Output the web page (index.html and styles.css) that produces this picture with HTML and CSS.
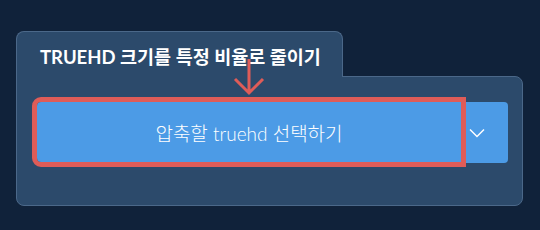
FILE: index.html
```html
<!DOCTYPE html>
<html lang="ko">
<head>
<meta charset="utf-8">
<link rel="stylesheet" href="styles.css">
</head>
<body>
<div class="card">
  <div class="tab"><h2 class="title">TRUEHD 크기를 특정 비율로 줄이기</h2></div>
  <div class="panel">
    <div class="split">
      <button class="main-btn">압축할 truehd 선택하기</button>
      <button class="toggle" aria-label="더보기">
        <svg width="16" height="10" viewBox="0 0 16 10"><path d="M1 1.5 L8 8.5 L15 1.5" fill="none" stroke="#ffffff" stroke-width="1.5"/></svg>
      </button>
    </div>
  </div>
  <svg class="arrow" width="32" height="38" viewBox="0 0 32 38"><path d="M16 1 V35 M2 21 L16 35 L30 21" fill="none" stroke="#df5c58" stroke-width="3" stroke-linejoin="miter"/></svg>
</div>
</body>
</html>
```
FILE: styles.css
```css
html, body {
  margin: 0;
  padding: 0;
  background: #10223a;
}
body {
  width: 540px;
  height: 230px;
  overflow: hidden;
  font-family: Lato, "Noto Sans CJK KR", sans-serif;
}
.card {
  position: relative;
  margin: 31px 0 0 16px;
  width: 507px;
}
.tab {
  position: relative;
  z-index: 1;
  box-sizing: border-box;
  width: 327px;
  height: 46px;
  margin-bottom: -1px;
  padding: 0 0 0 23px;
  display: flex;
  align-items: center;
  background: #2c4a6b;
  border: 1px solid #4b6889;
  border-bottom: none;
  border-radius: 8px 8px 0 0;
}
.title {
  margin: 0;
  padding-top: 2px;
  color: #ffffff;
  font-size: 18.5px;
  font-weight: 700;
  letter-spacing: 0;
}
.panel {
  box-sizing: border-box;
  width: 507px;
  height: 130px;
  padding: 25px 14px 0 20px;
  background: #2c4a6b;
  border: 1px solid #4b6889;
  border-radius: 0 8px 8px 8px;
}
.split {
  display: flex;
  height: 61px;
}
.main-btn {
  width: 424px;
  height: 60px;
  margin: 0;
  padding: 0;
  border: none;
  background: #4c9be6;
  color: #ffffff;
  font-family: Lato, "Noto Sans CJK KR", sans-serif;
  font-size: 19px;
  font-weight: 300;
  border-radius: 4px 0 0 4px;
  outline: 5px solid #df5c58;
  outline-offset: 0;
  position: relative;
  z-index: 1;
}
.toggle {
  flex: 1;
  height: 61px;
  margin: 0;
  padding: 0 0 0 8px;
  border: none;
  background: #4c9be6;
  border-radius: 0 4px 4px 0;
  display: flex;
  align-items: center;
  justify-content: flex-start;
}
.toggle svg {
  display: block;
}
.arrow {
  position: absolute;
  left: 217px;
  top: 27px;
  z-index: 2;
}
```
